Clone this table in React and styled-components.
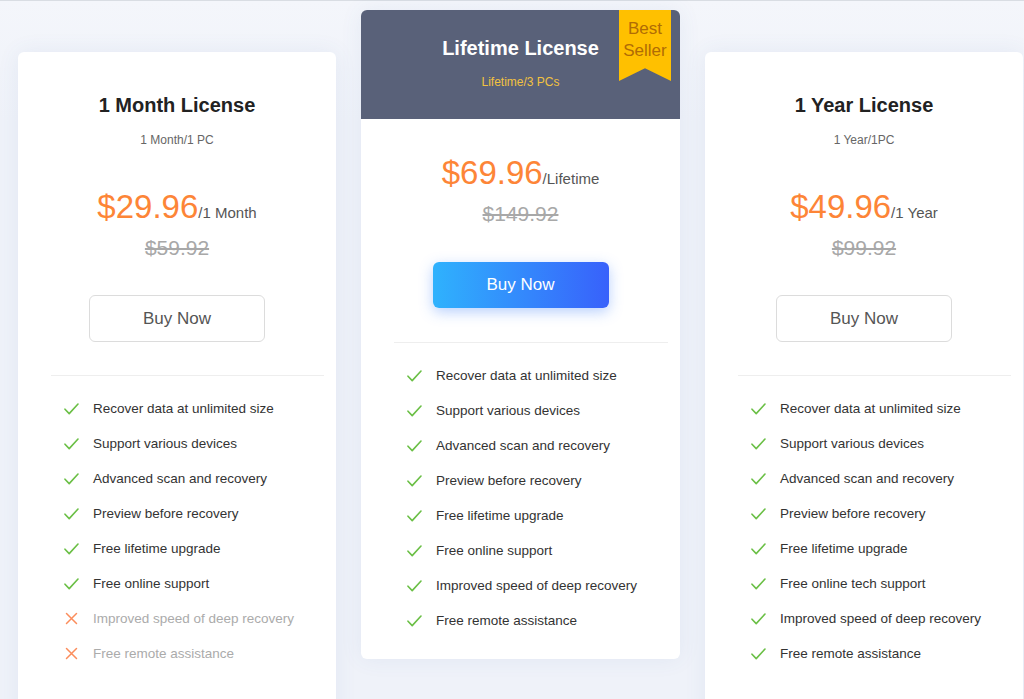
import React from "react";
import styled, { createGlobalStyle, css } from "styled-components";

const Global = createGlobalStyle`
  html, body {
    margin: 0;
    padding: 0;
    overflow: hidden;
    background: #f0f3f9;
    font-family: "Liberation Sans", Arial, sans-serif;
  }
`;

const Page = styled.div`
  min-height: 699px;
  box-sizing: border-box;
  border-top: 1px solid #d9dde3;
  background: linear-gradient(#f4f6fb, #eff2f9 120px);
  display: flex;
  align-items: flex-start;
  gap: 25px;
  padding-left: 18px;
`;

const Card = styled.div`
  position: relative;
  width: ${(p) => (p.$featured ? 319 : 318)}px;
  margin-top: ${(p) => (p.$featured ? 9 : 51)}px;
  background: #fff;
  border-radius: 6px;
  box-shadow: 0 0 22px rgba(70, 100, 170, 0.08);
  display: flex;
  flex-direction: column;
  align-items: center;
  padding-bottom: ${(p) => (p.$featured ? 21 : 50)}px;
`;

const Header = styled.div`
  align-self: stretch;
  display: flex;
  flex-direction: column;
  align-items: center;
  ${(p) =>
    p.$featured
      ? css`
          height: 109px;
          box-sizing: border-box;
          padding-top: 26px;
          background: #596179;
          border-radius: 6px 6px 0 0;
        `
      : css`
          padding-top: 41px;
        `}
`;

const Title = styled.h2`
  margin: 0;
  font-size: 20px;
  line-height: 24px;
  font-weight: 700;
  color: ${(p) => (p.$featured ? "#ffffff" : "#222222")};
`;

const Sub = styled.div`
  margin-top: ${(p) => (p.$featured ? 14 : 15)}px;
  font-size: 12px;
  line-height: 16px;
  color: ${(p) => (p.$featured ? "#f2c140" : "#666666")};
`;

const Ribbon = styled.div`
  position: absolute;
  top: 0;
  right: 9px;
  width: 52px;
  height: 71px;
  box-sizing: border-box;
  padding-top: 8px;
  background: #ffc000;
  clip-path: polygon(0 0, 100% 0, 100% 100%, 50% 82%, 0 100%);
  color: #b06c05;
  font-size: 17px;
  line-height: 22px;
  text-align: center;
`;

const PriceRow = styled.div`
  margin-top: ${(p) => (p.$featured ? 34 : 39)}px;
  display: flex;
  align-items: baseline;
  justify-content: center;
  line-height: 40px;
`;

const Price = styled.span`
  font-size: 33px;
  color: #fd8537;
`;

const Per = styled.span`
  font-size: 15px;
  color: #555555;
`;

const OldPrice = styled.div`
  margin-top: 2px;
  font-size: 21px;
  line-height: 26px;
  color: #a8a8a8;
  text-decoration: line-through;
`;

const BuyButton = styled.button`
  margin-top: ${(p) => (p.$featured ? 35 : 34)}px;
  width: 176px;
  height: ${(p) => (p.$featured ? 46 : 47)}px;
  border-radius: 6px;
  font-family: inherit;
  font-size: 17px;
  cursor: pointer;
  ${(p) =>
    p.$featured
      ? css`
          border: none;
          color: #fff;
          background: linear-gradient(90deg, #2fb2fd, #3861fb);
          box-shadow: 0 4px 14px rgba(52, 120, 250, 0.35);
        `
      : css`
          border: 1px solid #dcdcdc;
          color: #555;
          background: #fff;
        `}
`;

const Divider = styled.div`
  align-self: stretch;
  height: 1px;
  background: #eeeeee;
  margin: ${(p) => (p.$featured ? 34 : 33)}px 12px 0 33px;
`;

const Features = styled.ul`
  list-style: none;
  margin: 0;
  padding: 15px 0 0 46px;
  align-self: stretch;
`;

const Feature = styled.li`
  height: 35px;
  display: flex;
  align-items: center;
  gap: 14px;
  font-size: 13.5px;
  color: ${(p) => (p.$off ? "#ababab" : "#333333")};
`;

const IconBox = styled.span`
  width: 15px;
  display: flex;
  justify-content: center;
`;

const Check = () => (
  <svg width="15" height="12" viewBox="0 0 15 12" fill="none">
    <path d="M1 6.2 L5.2 10.6 L14 1" stroke="#6abf45" strokeWidth="1.6" strokeLinecap="round" strokeLinejoin="round" />
  </svg>
);

const Cross = () => (
  <svg width="13" height="13" viewBox="0 0 13 13" fill="none">
    <path d="M1.5 1.5 L11.5 11.5 M11.5 1.5 L1.5 11.5" stroke="#fb8d5c" strokeWidth="1.5" strokeLinecap="round" />
  </svg>
);

const plans = [
  {
    title: "1 Month License",
    sub: "1 Month/1 PC",
    price: "$29.96",
    per: "/1 Month",
    old: "$59.92",
    features: [
      ["Recover data at unlimited size", true],
      ["Support various devices", true],
      ["Advanced scan and recovery", true],
      ["Preview before recovery", true],
      ["Free lifetime upgrade", true],
      ["Free online support", true],
      ["Improved speed of deep recovery", false],
      ["Free remote assistance", false],
    ],
  },
  {
    featured: true,
    title: "Lifetime License",
    sub: "Lifetime/3 PCs",
    price: "$69.96",
    per: "/Lifetime",
    old: "$149.92",
    features: [
      ["Recover data at unlimited size", true],
      ["Support various devices", true],
      ["Advanced scan and recovery", true],
      ["Preview before recovery", true],
      ["Free lifetime upgrade", true],
      ["Free online support", true],
      ["Improved speed of deep recovery", true],
      ["Free remote assistance", true],
    ],
  },
  {
    title: "1 Year License",
    sub: "1 Year/1PC",
    price: "$49.96",
    per: "/1 Year",
    old: "$99.92",
    features: [
      ["Recover data at unlimited size", true],
      ["Support various devices", true],
      ["Advanced scan and recovery", true],
      ["Preview before recovery", true],
      ["Free lifetime upgrade", true],
      ["Free online tech support", true],
      ["Improved speed of deep recovery", true],
      ["Free remote assistance", true],
    ],
  },
];

export default function App() {
  return (
    <>
      <Global />
      <Page>
        {plans.map((p) => (
          <Card key={p.title} $featured={p.featured}>
            <Header $featured={p.featured}>
              <Title $featured={p.featured}>{p.title}</Title>
              <Sub $featured={p.featured}>{p.sub}</Sub>
            </Header>
            {p.featured && (
              <Ribbon>
                Best
                <br />
                Seller
              </Ribbon>
            )}
            <PriceRow $featured={p.featured}>
              <Price>{p.price}</Price>
              <Per>{p.per}</Per>
            </PriceRow>
            <OldPrice $featured={p.featured}>{p.old}</OldPrice>
            <BuyButton $featured={p.featured}>Buy Now</BuyButton>
            <Divider $featured={p.featured} />
            <Features>
              {p.features.map(([text, on]) => (
                <Feature key={text} $off={!on}>
                  <IconBox>{on ? <Check /> : <Cross />}</IconBox>
                  {text}
                </Feature>
              ))}
            </Features>
          </Card>
        ))}
      </Page>
    </>
  );
}
